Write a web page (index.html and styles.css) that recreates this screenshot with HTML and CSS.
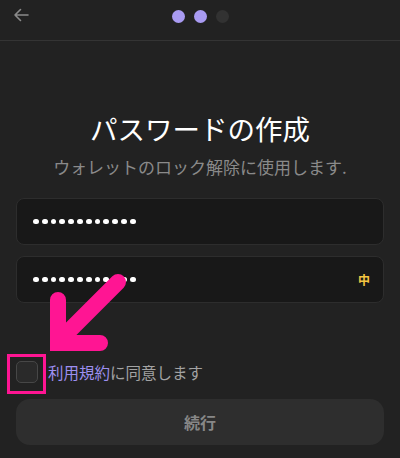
FILE: index.html
```html
<!DOCTYPE html>
<html lang="ja">
<head>
<meta charset="utf-8">
<link rel="stylesheet" href="styles.css">
</head>
<body>
<div class="page">
  <header class="topbar">
    <button class="back" aria-label="back">
      <svg width="16" height="14" viewBox="0 0 16 14"><path d="M15 7H2M7.5 1.5L2 7l5.5 5.5" fill="none" stroke="#8a8a8a" stroke-width="1.6" stroke-linecap="round" stroke-linejoin="round"/></svg>
    </button>
    <div class="steps">
      <span class="step on"></span>
      <span class="step on"></span>
      <span class="step"></span>
    </div>
  </header>
  <main class="content">
    <h1 class="title">パスワードの作成</h1>
    <p class="subtitle">ウォレットのロック解除に使用します.</p>
    <div class="field">
      <div class="dots"><i></i><i></i><i></i><i></i><i></i><i></i><i></i><i></i><i></i><i></i><i></i><i></i></div>
    </div>
    <div class="field second">
      <div class="dots"><i></i><i></i><i></i><i></i><i></i><i></i><i></i><i></i><i></i><i></i><i></i><i></i></div>
      <span class="strength">中</span>
    </div>
    <label class="agree">
      <span class="box"></span>
      <span class="agree-text"><span class="link">利用規約</span>に同意します</span>
    </label>
    <button class="continue">続行</button>
  </main>
  <svg class="annot" width="400" height="458" viewBox="0 0 400 458">
    <path d="M118 282L64 336" stroke="#ff1593" stroke-width="16" stroke-linecap="round" fill="none"/>
    <path d="M58 300V343H100" stroke="#ff1593" stroke-width="16" stroke-linecap="round" stroke-linejoin="miter" fill="none"/>
    <rect x="8.5" y="355.5" width="36" height="37" fill="none" stroke="#ff1593" stroke-width="3"/>
  </svg>
</div>
</body>
</html>
```
FILE: styles.css
```css
* { box-sizing: border-box; }
html, body { margin: 0; padding: 0; }
body {
  background: #222222;
  width: 400px;
  height: 458px;
  overflow: hidden;
  font-family: "Noto Sans CJK JP", "Noto Sans", sans-serif;
}
.page { position: relative; width: 400px; height: 458px; }
.topbar {
  height: 41px;
  border-bottom: 1px solid #343434;
  position: relative;
  display: flex;
  align-items: flex-start;
  justify-content: center;
}
.back {
  position: absolute;
  left: 13px;
  top: 8px;
  background: none;
  border: 0;
  padding: 0;
  width: 16px;
  height: 14px;
  display: flex;
}
.steps {
  display: flex;
  gap: 9px;
  margin-top: 10px;
}
.step {
  width: 13px;
  height: 13px;
  border-radius: 50%;
  background: #323232;
}
.step.on { background: #a99bf2; }
.content {
  padding: 0 16px;
  display: flex;
  flex-direction: column;
}
.title {
  margin: 69px 0 0;
  height: 36px;
  line-height: 36px;
  text-align: center;
  color: #ffffff;
  font-size: 27.5px;
  font-weight: 400;
}
.subtitle {
  margin: 9px 0 0;
  line-height: 24px;
  text-align: center;
  color: #8a8a8a;
  font-size: 17px;
}
.field {
  margin-top: 19px;
  height: 47px;
  background: #181818;
  border: 1px solid #2d2d2d;
  border-radius: 8px;
  display: flex;
  align-items: center;
  padding: 0 13px 0 16px;
}
.field.second { margin-top: 11px; }
.dots { display: flex; gap: 3px; }
.dots i {
  display: block;
  width: 5.8px;
  height: 5.8px;
  border-radius: 50%;
  background: #ffffff;
}
.strength {
  margin-left: auto;
  color: #f4c542;
  font-size: 12px;
  font-weight: 700;
}
.agree {
  margin-top: 57px;
  display: flex;
  align-items: center;
  gap: 10px;
  height: 24px;
}
.box {
  width: 22px;
  height: 22px;
  border: 1px solid #474747;
  border-radius: 5px;
  background: #2a2a2a;
}
.agree-text {
  font-size: 15.5px;
  color: #a3a3a3;
  line-height: 24px;
}
.link { color: #9d8ff0; }
.continue {
  margin-top: 15px;
  height: 46px;
  border: 0;
  border-radius: 14px;
  background: #2e2e2e;
  color: #878787;
  font-family: inherit;
  font-size: 16px;
  font-weight: 700;
}
.annot { position: absolute; left: 0; top: 0; pointer-events: none; }
```
